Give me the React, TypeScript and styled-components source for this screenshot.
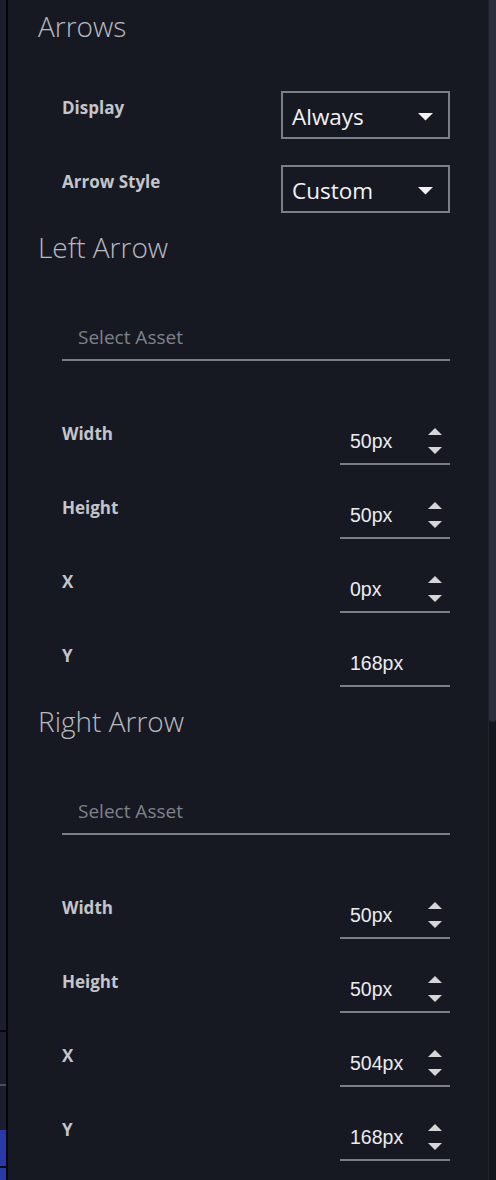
import styled, { createGlobalStyle } from 'styled-components'

const GlobalStyle = createGlobalStyle`
    html, body {
        margin: 0;
        padding: 0;
        background: #171922;
    }
    * {
        box-sizing: border-box;
    }
`

type NumberField = {
    label: string;
    value: string;
    spinner: boolean;
}

type ArrowSection = {
    title: string;
    fields: Array<NumberField>;
}

const sections: Array<ArrowSection> = [
    {
        title: 'Left Arrow',
        fields: [
            { label: 'Width', value: '50px', spinner: true },
            { label: 'Height', value: '50px', spinner: true },
            { label: 'X', value: '0px', spinner: true },
            { label: 'Y', value: '168px', spinner: false },
        ],
    },
    {
        title: 'Right Arrow',
        fields: [
            { label: 'Width', value: '50px', spinner: true },
            { label: 'Height', value: '50px', spinner: true },
            { label: 'X', value: '504px', spinner: true },
            { label: 'Y', value: '168px', spinner: true },
        ],
    },
]

function Caret() {
    return (
        <svg width="15" height="8" viewBox="0 0 15 8">
            <polygon points="0,0 15,0 7.5,7.5" fill="#f2f2f2" />
        </svg>
    )
}

function Spinner() {
    return (
        <SpinnerBox>
            <svg width="14" height="7" viewBox="0 0 14 7">
                <polygon points="0,7 14,7 7,0" fill="#d6d6d8" />
            </svg>
            <svg width="14" height="7" viewBox="0 0 14 7">
                <polygon points="0,0 14,0 7,7" fill="#d6d6d8" />
            </svg>
        </SpinnerBox>
    )
}

function App() {
    return (
        <Page>
            <GlobalStyle />
            <SideStrip>
                <StripSpacer />
                <StripRule tone="#07080b" />
                <StripGap size={52} />
                <StripRule tone="#4c4e5a" />
                <StripGap size={44} />
                <StripBlue />
                <StripRule tone="#07080b" />
                <StripTail />
            </SideStrip>
            <Divider />
            <Panel>
                <Heading>Arrows</Heading>
                <Rows>
                    <SelectRow>
                        <Label>Display</Label>
                        <SelectBox>
                            <span>Always</span>
                            <Caret />
                        </SelectBox>
                    </SelectRow>
                    <SelectRow>
                        <Label>Arrow Style</Label>
                        <SelectBox>
                            <span>Custom</span>
                            <Caret />
                        </SelectBox>
                    </SelectRow>
                </Rows>
                {sections.map(section => (
                    <Section key={section.title}>
                        <Heading>{section.title}</Heading>
                        <AssetField>Select Asset</AssetField>
                        <NumberRows>
                            {section.fields.map(field => (
                                <NumberRow key={field.label}>
                                    <Label>{field.label}</Label>
                                    <NumberInput>
                                        <span>{field.value}</span>
                                        {field.spinner && <Spinner />}
                                    </NumberInput>
                                </NumberRow>
                            ))}
                        </NumberRows>
                    </Section>
                ))}
            </Panel>
            <ScrollTrack>
                <ScrollThumb />
            </ScrollTrack>
        </Page>
    )
}

const Page = styled.div`
    display: flex;
    width: 496px;
    height: 1180px;
    overflow: hidden;
    background: #171922;
    font-family: "Open Sans", "Noto Sans", sans-serif;
`

const SideStrip = styled.div`
    width: 6px;
    display: flex;
    flex-direction: column;
    background: #1c1e2b;
`

const StripSpacer = styled.div`
    height: 1030px;
`

const StripGap = styled.div<{ size: number }>`
    height: ${p => p.size}px;
`

const StripRule = styled.div<{ tone: string }>`
    height: 2px;
    background: ${p => p.tone};
`

const StripBlue = styled.div`
    height: 36px;
    background: #2a38a8;
`

const StripTail = styled.div`
    flex: 1;
    background: #2a38a8;
`

const Divider = styled.div`
    width: 2px;
    background: #050608;
`

const Panel = styled.div`
    flex: 1;
    padding: 0 38px 0 30px;
    display: flex;
    flex-direction: column;
`

const Heading = styled.div`
    height: 54px;
    line-height: 52px;
    font-size: 28px;
    font-weight: 300;
    color: #b9bac0;
`

const Rows = styled.div`
    display: flex;
    flex-direction: column;
    gap: 26px;
    margin-top: 37px;
    padding-left: 24px;
`

const SelectRow = styled.div`
    display: flex;
    justify-content: space-between;
    align-items: flex-start;
    height: 48px;
`

const Label = styled.div`
    padding-top: 7px;
    font-size: 17px;
    line-height: 20px;
    font-weight: 700;
    color: #c4c5ca;
`

const SelectBox = styled.div`
    width: 169px;
    height: 48px;
    border: 2px solid #7b7d89;
    display: flex;
    align-items: center;
    justify-content: space-between;
    padding: 2px 15px 0 9px;
    font-size: 22.5px;
    color: #f2f2f4;

    svg {
        margin-top: 2px;
    }
`

const Section = styled.div`
    display: flex;
    flex-direction: column;
    margin-top: 8px;
`

const AssetField = styled.div`
    margin: 38px 0 0 24px;
    height: 48px;
    border-bottom: 2px solid #7b7d89;
    padding: 11px 0 0 16px;
    font-size: 19px;
    line-height: 26px;
    color: #7f818b;
`

const NumberRows = styled.div`
    display: flex;
    flex-direction: column;
    gap: 26px;
    margin-top: 56px;
    padding-left: 24px;
`

const NumberRow = styled.div`
    display: flex;
    justify-content: space-between;
    align-items: flex-start;
    height: 48px;
`

const NumberInput = styled.div`
    width: 110px;
    height: 48px;
    border-bottom: 2px solid #7b7d89;
    display: flex;
    align-items: center;
    justify-content: space-between;
    padding: 3px 8px 0 10px;
    font-family: "Liberation Sans", Arial, sans-serif;
    font-size: 19.5px;
    color: #ececee;
`

const SpinnerBox = styled.div`
    display: flex;
    flex-direction: column;
    gap: 12px;
    margin-top: -2px;
`

const ScrollTrack = styled.div`
    width: 8px;
    background: #14161d;
    border-left: 1px solid #20222c;
`

const ScrollThumb = styled.div`
    height: 722px;
    background: #2b2d3a;
    border-radius: 0 0 4px 4px;
`

export default App
